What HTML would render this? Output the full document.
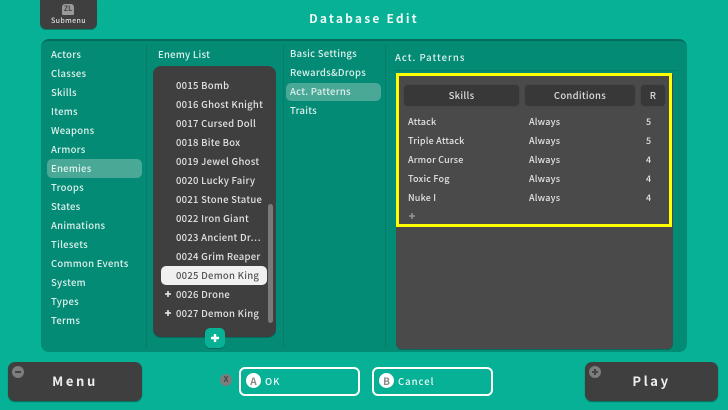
<!DOCTYPE html>
<html><head><meta charset="utf-8"><style>
*{box-sizing:border-box;margin:0;padding:0}
html,body{width:728px;height:410px;overflow:hidden;background:#07b195}
body{position:relative;font-family:"Noto Sans CJK JP","Liberation Sans",sans-serif;color:#e6f3ef}
.a{position:absolute}
.t{position:absolute;font-size:9.5px;font-weight:500;line-height:14px;letter-spacing:.27px;white-space:nowrap;color:#dff1ec}
.w{color:#e2e2e2}
.s{font-size:9px;letter-spacing:.2px}
.d{position:absolute;background:#3f3f3f}
.v{position:absolute;width:1px;top:45px;height:303px;background:#067c69}
.h{position:absolute;top:85px;height:21px;background:#383838;border-radius:4px;color:#ddd;font-size:9.5px;font-weight:500;line-height:21px;text-align:center;letter-spacing:.27px;box-shadow:0 0 1px #333}
.o{position:absolute;top:367px;width:121px;height:29px;border:2px solid #fff;border-radius:6px}
.c{position:absolute;left:5px;top:4px;width:15px;height:15px;border-radius:50%;background:#fff;color:#888;font-size:10px;font-weight:700;line-height:15px;text-align:center}
.n{position:absolute;border-radius:50%;background:#7d7d7d;color:#444;text-align:center;font-weight:700}
</style></head><body>
<div class="d" style="left:40px;top:-4px;width:57px;height:33px;border-radius:6px;box-shadow:0 1px 0 #067c69"></div>
<div class="a" style="left:62px;top:4px;width:12px;height:11px;background:#999;border-radius:3px 3px 1px 1px;color:#444;font-size:7px;font-weight:700;line-height:11px;text-align:center">ZL</div>
<div class="t" style="left:40px;width:57px;text-align:center;top:14px;font-size:7px;letter-spacing:.4px;color:#ddd">Submenu</div>
<div class="t" style="left:264px;width:200px;text-align:center;top:12px;font-size:12px;font-weight:700;letter-spacing:2.2px;color:#eef9f6">Database Edit</div>

<div class="a" style="left:41px;top:39px;width:646px;height:313px;background:#038b76;border-radius:8px;border-top:2px solid #056b5b"></div>
<div class="v" style="left:146px"></div><div class="v" style="left:283px"></div><div class="v" style="left:385px"></div>

<div class="a" style="left:47px;top:159px;width:95px;height:19px;border-radius:5px;background:#4aa897"></div>
<div class="t" style="left:51px;top:47px">Actors</div>
<div class="t" style="left:51px;top:66px">Classes</div>
<div class="t" style="left:51px;top:85px">Skills</div>
<div class="t" style="left:51px;top:104px">Items</div>
<div class="t" style="left:51px;top:123px">Weapons</div>
<div class="t" style="left:51px;top:142px">Armors</div>
<div class="t" style="left:51px;top:161px">Enemies</div>
<div class="t" style="left:51px;top:180px">Troops</div>
<div class="t" style="left:51px;top:199px">States</div>
<div class="t" style="left:51px;top:218px">Animations</div>
<div class="t" style="left:51px;top:237px">Tilesets</div>
<div class="t" style="left:51px;top:256px">Common Events</div>
<div class="t" style="left:51px;top:275px">System</div>
<div class="t" style="left:51px;top:294px">Types</div>
<div class="t" style="left:51px;top:313px">Terms</div>

<div class="t" style="left:158px;top:47px">Enemy List</div>
<div class="d" style="left:153px;top:66px;width:123px;height:271px;border-radius:8px;box-shadow:0 1px 0 #056b5b"></div>
<div class="a" style="left:161px;top:266px;width:106px;height:19px;border-radius:5px;background:#f0f0f0"></div>
<div class="a" style="left:268px;top:204px;width:5px;height:119px;border-radius:3px;background:#7a7a7a"></div>
<div class="t w" style="left:176px;top:78px">0015 Bomb</div>
<div class="t w" style="left:176px;top:97px">0016 Ghost Knight</div>
<div class="t w" style="left:176px;top:116px">0017 Cursed Doll</div>
<div class="t w" style="left:176px;top:135px">0018 Bite Box</div>
<div class="t w" style="left:176px;top:154px">0019 Jewel Ghost</div>
<div class="t w" style="left:176px;top:173px">0020 Lucky Fairy</div>
<div class="t w" style="left:176px;top:192px">0021 Stone Statue</div>
<div class="t w" style="left:176px;top:211px">0022 Iron Giant</div>
<div class="t w" style="left:176px;top:230px">0023 Ancient Dr⋯</div>
<div class="t w" style="left:176px;top:249px">0024 Grim Reaper</div>
<div class="t" style="left:176px;top:268px;color:#555">0025 Demon King</div>
<div class="t w" style="left:176px;top:287px">0026 Drone</div>
<div class="t w" style="left:176px;top:306px">0027 Demon King</div>
<svg class="a" style="left:164px;top:290px" width="9" height="28"><path d="M1 4H7M4 1V7M1 23H7M4 20V26" stroke="#eee" stroke-width="1.500"/></svg>
<div class="a" style="left:205px;top:328px;width:20px;height:20px;border-radius:5px;background:#07b195;box-shadow:0 1px 0 #056b5b"></div>
<svg class="a" style="left:210px;top:333px" width="10" height="10"><path d="M1 5H9M5 1V9" stroke="#fff" stroke-width="2.400"/></svg>

<div class="t" style="left:290px;top:46px">Basic Settings</div>
<div class="t" style="left:290px;top:65px">Rewards&amp;Drops</div>
<div class="a" style="left:286px;top:83px;width:95px;height:18px;border-radius:5px;background:#4aa897"></div>
<div class="t" style="left:290px;top:84px">Act. Patterns</div>
<div class="t" style="left:290px;top:103px">Traits</div>

<div class="t" style="left:395px;top:50px;font-size:9.500px;letter-spacing:1px">Act. Patterns</div>
<div class="a" style="left:395px;top:70px;width:283px;height:1px;background:#067c69"></div>
<div class="a" style="left:396px;top:74px;width:277px;height:275px;background:#4a4a4a;border-radius:0 0 6px 6px;box-shadow:0 1px 0 #056b5b"></div>
<div class="h" style="left:404px;width:115px">Skills</div>
<div class="h" style="left:525px;width:110px">Conditions</div>
<div class="h" style="left:641px;width:24px">R</div>
<div class="t w s" style="left:408px;top:115px">Attack</div>
<div class="t w s" style="left:408px;top:134px">Triple Attack</div>
<div class="t w s" style="left:408px;top:153px">Armor Curse</div>
<div class="t w s" style="left:408px;top:172px">Toxic Fog</div>
<div class="t w s" style="left:408px;top:191px">Nuke I</div>
<div class="t w s" style="left:529px;top:115px">Always</div>
<div class="t w s" style="left:529px;top:134px">Always</div>
<div class="t w s" style="left:529px;top:153px">Always</div>
<div class="t w s" style="left:529px;top:172px">Always</div>
<div class="t w s" style="left:529px;top:191px">Always</div>
<div class="t w s" style="left:646px;top:115px">5</div>
<div class="t w s" style="left:646px;top:134px">5</div>
<div class="t w s" style="left:646px;top:153px">4</div>
<div class="t w s" style="left:646px;top:172px">4</div>
<div class="t w s" style="left:646px;top:191px">4</div>
<svg class="a" style="left:408px;top:212px" width="8" height="8"><path d="M1 4H7M4 1V7" stroke="#a0a0a0" stroke-width="1.300"/></svg>
<div class="a" style="left:396px;top:73px;width:276px;height:154px;border:3px solid #ffff00"></div>

<div class="d" style="left:8px;top:362px;width:134px;height:39px;border-radius:7px;box-shadow:0 1px 1px #056b5b"></div>
<div class="n" style="left:12px;top:366px;width:12px;height:12px"></div>
<div class="a" style="left:15px;top:371px;width:6px;height:2px;background:#444"></div>
<div class="t" style="left:8px;width:134px;text-align:center;top:371px;font-size:13px;line-height:19px;font-weight:700;letter-spacing:2.6px;color:#eee">Menu</div>

<div class="n" style="left:220px;top:374px;width:12px;height:12px;font-size:8px;line-height:12px">X</div>
<div class="o" style="left:239px"><div class="c">A</div><div class="t" style="left:24px;top:5px;color:#eafaf6;letter-spacing:1px">OK</div></div>
<div class="o" style="left:372px"><div class="c">B</div><div class="t" style="left:24px;top:5px;color:#eafaf6;letter-spacing:1px">Cancel</div></div>

<div class="d" style="left:585px;top:362px;width:133px;height:39px;border-radius:7px;box-shadow:0 1px 1px #056b5b"></div>
<div class="n" style="left:589px;top:366px;width:12px;height:12px"></div>
<svg class="a" style="left:591px;top:368px" width="8" height="8"><path d="M1 4H7M4 1V7" stroke="#444" stroke-width="2"/></svg>
<div class="t" style="left:585px;width:133px;text-align:center;top:371px;font-size:13px;line-height:19px;font-weight:700;letter-spacing:2.6px;color:#eee">Play</div>
</body></html>
